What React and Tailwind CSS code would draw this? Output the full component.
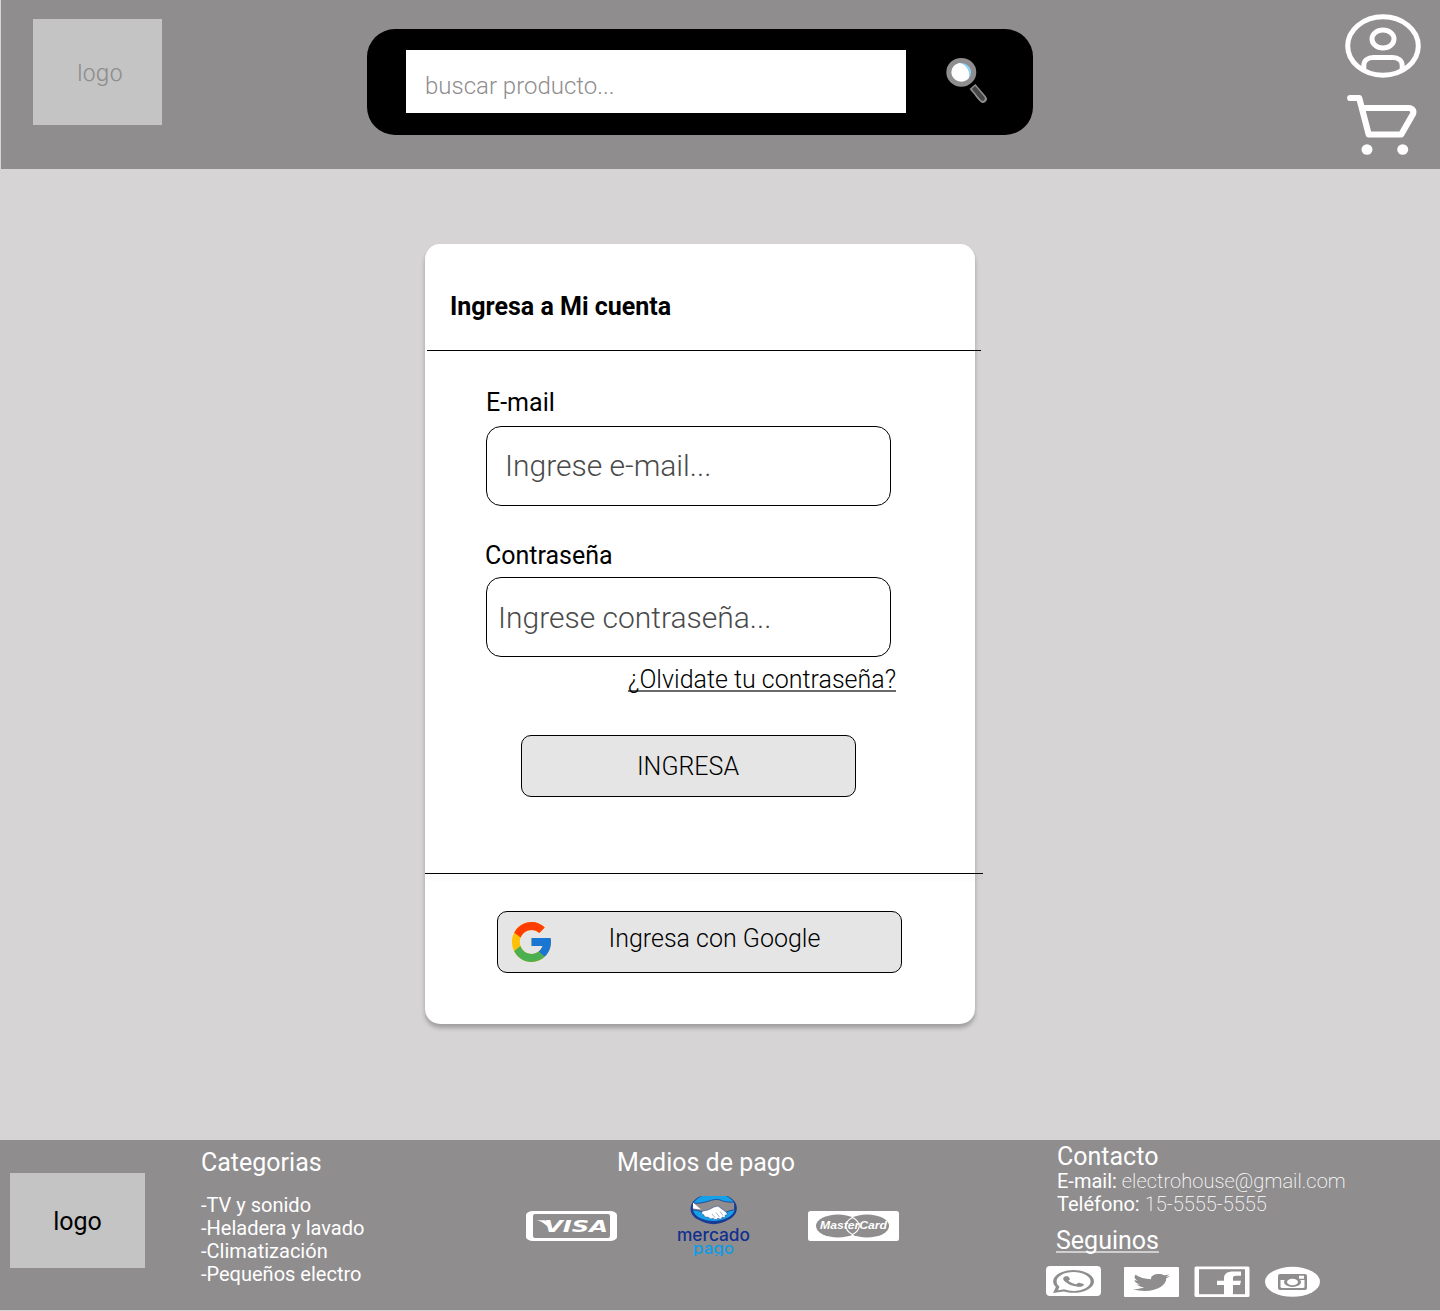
import { FaWhatsapp, FaTwitter } from "react-icons/fa";

const GRAY = "#8f8d8e";

function SearchIcon() {
  return (
    <svg width="44" height="48" viewBox="0 0 44 48" fill="none">
      <path d="M28.500 30.500L39 43" stroke={GRAY} strokeWidth="7.600" />
      <path d="M35 38.500L39 43" stroke={GRAY} strokeWidth="7.600" strokeLinecap="round" />
      <path d="M29.500 31.500L39 43" stroke="#464646" strokeWidth="4.400" />
      <path d="M35 38.500L39 43" stroke="#464646" strokeWidth="3.600" strokeLinecap="round" />
      <ellipse cx="17.300" cy="16.300" rx="12.400" ry="11.800" fill="#8fd0f5" stroke={GRAY} strokeWidth="5.200" />
      <path d="M15.500 7.100A9.800 9.300 0 1 0 24.500 22.500C27 17 23 8.500 15.500 7.100z" fill="#fff" />
    </svg>
  );
}

function UserIcon() {
  return (
    <svg width="76" height="64" viewBox="0 0 76 64" fill="none" stroke="#fff" strokeWidth="5">
      <ellipse cx="38" cy="32" rx="35.300" ry="29.200" />
      <ellipse cx="38" cy="25" rx="11" ry="9" />
      <path d="M18.800 56v-4.500c0-5 4-8 9.500-8h19.400c5.500 0 9.500 3 9.500 8V56" />
    </svg>
  );
}

function CartIcon() {
  return (
    <svg width="72" height="62" viewBox="0 0 72 62" fill="none">
      <path d="M3.200 4h9L21.700 40.500h32.500L65.700 20.500c2-4-1-6.500-4-6.500H15.500" stroke="#fff" strokeWidth="6.200" strokeLinecap="round" strokeLinejoin="round" />
      <ellipse cx="20" cy="55.500" rx="5.500" ry="5.200" fill="#fff" />
      <ellipse cx="55.700" cy="55.500" rx="5.500" ry="5.200" fill="#fff" />
    </svg>
  );
}

function GoogleIcon() {
  return (
    <svg width="39" height="40" viewBox="4 4 40 40" preserveAspectRatio="none">
      <path fill="#FFC107" d="M43.611 20.083H42V20H24v8h11.303C33.654 32.657 29.223 36 24 36c-6.627 0-12-5.373-12-12s5.373-12 12-12c3.059 0 5.842 1.154 7.961 3.039l5.657-5.657C34.046 6.053 29.268 4 24 4 12.955 4 4 12.955 4 24s8.955 20 20 20 20-8.955 20-20c0-1.341-.138-2.650-.389-3.917z" />
      <path fill="#FF3D00" d="M6.306 14.691l6.571 4.819C14.655 15.108 18.961 12 24 12c3.059 0 5.842 1.154 7.961 3.039l5.657-5.657C34.046 6.053 29.268 4 24 4 16.318 4 9.656 8.337 6.306 14.691z" />
      <path fill="#4CAF50" d="M24 44c5.166 0 9.860-1.977 13.409-5.192l-6.190-5.238C29.211 35.091 26.715 36 24 36c-5.202 0-9.619-3.317-11.283-7.946l-6.522 5.025C9.505 39.556 16.227 44 24 44z" />
      <path fill="#1976D2" d="M43.611 20.083H42V20H24v8h11.303c-.792 2.237-2.231 4.166-4.087 5.571l6.193 5.238C36.971 39.205 44 34 44 24c0-1.341-.138-2.650-.389-3.917z" />
    </svg>
  );
}

function VisaLogo() {
  return (
    <svg width="91" height="30" viewBox="0 0 91 30">
      <rect width="91" height="30" rx="7" ry="4" fill="#fff" />
      <rect x="7" y="3" width="77" height="24" rx="2" fill={GRAY} />
      <path d="M10 9.200h9l5 4-1 3.500C18 12 15 10 10 9.200z" fill="#fff" />
      <text x="18" y="20.500" fill="#fff" textLength="64" lengthAdjust="spacingAndGlyphs" className="font-['DejaVu_Sans'] text-[15.500px] font-bold italic">VISA</text>
    </svg>
  );
}

function MercadoPagoLogo() {
  return (
    <svg width="74" height="60" viewBox="0 0 74 60">
      <path d="M24 0h26c13 5 13 19 1 24-9 5.500-20 5.500-29 0C10 19 11 5 24 0z" fill="#1a3a94" />
      <path d="M25 0h24c12 5 12 17 1 22-8 4-19 4-27 0C13 17 13 5 25 0z" fill="#15a0e8" />
      <path d="M15.500 7c8 1 12-1 17-2 5-2 9-2 13 0 4 1 8 1.500 12 1v8c-3 0-6 1-8 2L30 18c-4-2-8-4-14-4z" fill={GRAY} stroke="#1a3a94" strokeWidth=".8" />
      <path d="M16 6.500l8 7-8-1z" fill="#fff" />
      <path d="M26 15l5-1 6-3 4-1 8 6c2 2 1 4-1 3 1 3-1 3-3 2 0 2-2 3-4 1-1 2-4 2-5 0-2 2-4 0-5-1-3 1-4-1-4-2-3-1-3-3-1-4z" fill="#fff" stroke="#1a3a94" strokeWidth=".5" />
      <path d="M35 18l3 3.500M39 16.500l3.500 4.500M43 15.500l3 4" fill="none" stroke="#8f9cc4" strokeWidth=".8" />
      <text x="0" y="44.700" fill="#102f91" textLength="73" lengthAdjust="spacingAndGlyphs" className="font-[Inter] text-[17px] font-medium">mercado</text>
      <text x="16" y="57.500" fill="#0e9ce5" textLength="41" lengthAdjust="spacingAndGlyphs" className="font-[Inter] text-[16.500px] font-medium">pago</text>
    </svg>
  );
}

function MasterCardLogo() {
  return (
    <svg width="91" height="30" viewBox="0 0 91 30">
      <rect width="91" height="30" rx="2.500" fill="#fff" />
      <ellipse cx="30" cy="15" rx="22" ry="11.500" fill={GRAY} />
      <ellipse cx="59" cy="15" rx="22" ry="11.500" fill={GRAY} />
      <path d="M44.500 6.500c9 5 9 12 0 17-9-5-9-12 0-17z" fill="none" stroke="#fff" strokeWidth="1.200" />
      <text x="12" y="17.800" fill="#fff" textLength="67" lengthAdjust="spacingAndGlyphs" className="font-['Liberation_Sans'] text-[10px] font-bold italic">MasterCard</text>
    </svg>
  );
}

function FacebookIcon() {
  return (
    <svg width="56" height="31" viewBox="0 0 56 31">
      <rect x=".5" y=".5" width="55" height="30.500" rx="1.500" fill="#fff" />
      <rect x="5" y="3.200" width="46" height="25" fill={GRAY} />
      <path d="M30 29V19h-7v-4.200h7V12c0-4.500 4-6.500 9-6.500h8v4.200h-5c-2 0-3 .7-3 2v3.100h8L46 19h-7v10z" fill="#fff" />
    </svg>
  );
}

function InstagramIcon() {
  return (
    <svg width="56" height="31" viewBox="0 0 56 31">
      <ellipse cx="28.500" cy="15.800" rx="27.500" ry="15" fill="#fff" />
      <rect x="14" y="8" width="29" height="16" rx="2" fill={GRAY} />
      <path d="M16.500 14h24v6.700c0 .8-.5 1.200-1.500 1.200H18c-1 0-1.500-.4-1.500-1.200z" fill="#fff" />
      <rect x="35" y="9.700" width="5" height="3" fill="#fff" />
      <ellipse cx="28.500" cy="16" rx="8.500" ry="4.900" fill={GRAY} />
      <ellipse cx="28.500" cy="16" rx="5.500" ry="3.200" fill="#fff" />
    </svg>
  );
}

function Header() {
  return (
    <header className="ml-px flex h-[169px] items-start bg-[#8f8d8e]">
      <div className="mt-[19px] ml-8 flex h-[106px] w-[129px] items-center justify-center bg-[#c4c4c4] pt-[2px] pl-[5px] font-[Inter] text-[22.500px] font-light text-[#8f8d8e]">
        <span>logo</span>
      </div>
      <div className="mt-[29px] ml-[205px] flex h-[106px] w-[666px] items-start rounded-[28px] bg-black">
        <div className="mt-[21px] ml-[39px] h-[63px] w-[500px] bg-white pt-[22px] pl-[19px] text-2xl leading-[29px] font-light text-[#8f8d8e]">
          buscar producto...
        </div>
        <div className="mt-[27px] ml-[38px]"><SearchIcon /></div>
      </div>
      <div className="mt-[14px] ml-[312px] flex flex-col">
        <UserIcon />
        <div className="mt-4 ml-0.5"><CartIcon /></div>
      </div>
    </header>
  );
}

function LoginCard() {
  return (
    <main className="mt-[75px] ml-[425px] flex h-[780px] w-[550px] flex-col rounded-[15px] bg-white text-[25px] leading-[29px] shadow-[0_4px_4px_rgba(0,0,0,0.25)]">
      <h1 className="mt-12 ml-[25px] font-bold">Ingresa a Mi cuenta</h1>
      <div className="mt-[29px] ml-[2px] h-px w-[554px] bg-black" />
      <label className="mt-[37px] ml-[61px]">E-mail</label>
      <div className="mt-[9px] ml-[61px] h-20 w-[405px] rounded-[15px] border border-black pt-[21px] pl-[18px] text-[30px] leading-[35px] font-light text-[#4a4a4a]">
        Ingrese e-mail...
      </div>
      <label className="mt-[35px] ml-[60px]">Contraseña</label>
      <div className="mt-[7px] ml-[61px] h-20 w-[405px] rounded-[15px] border border-black pt-[22px] pl-[11px] text-[30px] leading-[35px] font-light text-[#4a4a4a]">
        Ingrese contraseña...
      </div>
      <a className="mt-2 mr-[79px] self-end font-light underline decoration-[#6a6a6a] decoration-2 underline-offset-[2px] [text-decoration-skip-ink:none]">¿Olvidate tu contraseña?</a>
      <button className="mt-[41px] ml-24 h-[62px] w-[335px] rounded-[10px] border border-black bg-[#e5e5e5] pr-px font-light">INGRESA</button>
      <div className="mt-[76px] h-px w-[558px] bg-black shadow-[0_4px_4px_rgba(0,0,0,0.1)]" />
      <button className="mt-[37px] ml-[72px] flex h-[62px] w-[405px] items-start rounded-[10px] border border-black bg-[#e5e5e5] font-light">
        <span className="mt-[10px] ml-[14px]"><GoogleIcon /></span>
        <span className="mt-3 ml-[57.500px]">Ingresa con Google</span>
      </button>
    </main>
  );
}

function Footer() {
  return (
    <footer className="mt-[116px] flex h-[170px] items-start bg-[#8f8d8e] text-[25px] leading-[29px] text-white">
      <div className="mt-[33px] ml-[10px] flex h-[95px] w-[135px] items-center justify-center bg-[#c4c4c4] pt-px text-black">logo</div>
      <section className="mt-2 ml-14 w-[325px]">
        <h2>Categorias</h2>
        <ul className="mt-[17px] text-[20px] leading-[23px]">
          <li>-TV y sonido</li>
          <li>-Heladera y lavado</li>
          <li>-Climatización</li>
          <li>-Pequeños electro</li>
        </ul>
      </section>
      <section className="mt-2 w-[530px]">
        <h2 className="ml-[91px]">Medios de pago</h2>
        <div className="mt-[19px] flex items-center">
          <VisaLogo />
          <div className="ml-[60px]"><MercadoPagoLogo /></div>
          <div className="ml-[57px]"><MasterCardLogo /></div>
        </div>
      </section>
      <section className="mt-[2px]">
        <h2 className="ml-px">Contacto</h2>
        <div className="-mt-px ml-px text-[20px] leading-[23px]">
          <p>E-mail: <span className="font-extralight tracking-[0.08px]">electrohouse@gmail.com</span></p>
          <p>Teléfono: <span className="font-extralight tracking-[0.04px]">15-5555-5555</span></p>
        </div>
        <h2 className="mt-[10px] underline decoration-[#d0cfcf] decoration-2 underline-offset-[2px] [text-decoration-skip-ink:none]">Seguinos</h2>
        <div className="-ml-[10px] mt-[11px] flex">
          <div className="flex h-[30px] w-[55px] items-center justify-center rounded bg-white">
            <FaWhatsapp color={GRAY} viewBox="0 32 448 448" preserveAspectRatio="none" className="h-[23px] w-[41px]" />
          </div>
          <div className="mt-px ml-[23px] flex h-[30px] w-[55px] items-center justify-center rounded-[1px] bg-white">
            <FaTwitter color={GRAY} viewBox="0 48 512 416" preserveAspectRatio="none" className="h-[17px] w-[37px]" />
          </div>
          <div className="ml-[15px]"><FacebookIcon /></div>
          <div className="ml-[14px]"><InstagramIcon /></div>
        </div>
      </section>
    </footer>
  );
}

export default function App() {
  return (
    <div className="h-[1311px] w-[1440px] overflow-hidden bg-[#d6d4d5] font-[Roboto,sans-serif] text-black">
      <Header />
      <LoginCard />
      <Footer />
    </div>
  );
}
